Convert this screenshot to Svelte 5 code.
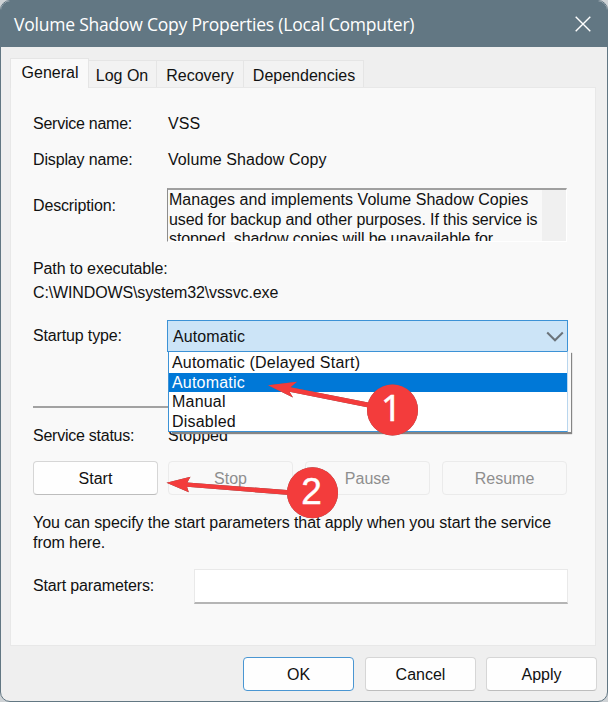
<script>
  const tabs = ['General', 'Log On', 'Recovery', 'Dependencies'];
  const startupTypes = ['Automatic (Delayed Start)', 'Automatic', 'Manual', 'Disabled'];
  const actions = ['Start', 'Stop', 'Pause', 'Resume'];

  let activeTab = $state('General');
  let startupType = $state('Automatic');
  let open = $state(true);
  let params = $state('');

  function pick(type) {
    startupType = type;
    open = false;
  }
</script>

<div class="dialog">
  <header class="titlebar">
    <span class="title">Volume Shadow Copy Properties (Local Computer)</span>
    <button class="close" aria-label="Close">
      <svg width="16" height="16" viewBox="0 0 16 16">
        <path d="M0.7 0.7 15.3 15.3M15.3 0.7 0.7 15.3" />
      </svg>
    </button>
  </header>

  <nav class="tabs">
    {#each tabs as tab}
      <button
        class="tab {tab.toLowerCase().replace(' ', '-')}"
        class:active={activeTab === tab}
        onclick={() => (activeTab = tab)}
      >{tab}</button>
    {/each}
  </nav>

  <main class="panel">
    <div class="row name">
      <span class="label tight">Service name:</span>
      <span class="value">VSS</span>
    </div>
    <div class="row name">
      <span class="label">Display name:</span>
      <span class="value">Volume Shadow Copy</span>
    </div>
    <div class="row desc">
      <span class="label">Description:</span>
      <div class="description">
        <div class="text">
          <div class="wide">Manages and implements Volume Shadow Copies</div>
          <div class="narrow">used for backup and other purposes. If this service is</div>
          <div class="narrow">stopped, shadow copies will be unavailable for</div>
        </div>
        <div class="scroll"></div>
      </div>
    </div>
    <div class="path">
      <div>Path to executable:</div>
      <div>C:\WINDOWS\system32\vssvc.exe</div>
    </div>
    <div class="row startup">
      <span class="label">Startup type:</span>
      <div class="combo">
        <button class="combo-value" onclick={() => (open = !open)}>
          <span>{startupType}</span>
          <svg width="18" height="11" viewBox="0 0 18 11">
            <path d="M1.2 1.5 9 9.3 16.8 1.5" />
          </svg>
        </button>
        {#if open}
          <div class="menu">
            {#each startupTypes as type}
              <button class="option" class:selected={type === startupType} onclick={() => pick(type)}>
                {type}
              </button>
            {/each}
          </div>
        {/if}
      </div>
    </div>
    <hr />
    <div class="row status">
      <span class="label tight">Service status:</span>
      <span class="value">Stopped</span>
    </div>
    <div class="actions">
      {#each actions as action}
        <button class="btn" disabled={action !== 'Start'}>{action}</button>
      {/each}
    </div>
    <p class="hint">
      You can specify the start parameters that apply when you start the service<br />
      from here.
    </p>
    <div class="row params">
      <span class="label">Start parameters:</span>
      <input bind:value={params} aria-label="Start parameters" />
    </div>
  </main>

  <footer class="footer">
    <button class="btn ok">OK</button>
    <button class="btn">Cancel</button>
    <button class="btn">Apply</button>
  </footer>

  <svg class="callouts" width="608" height="702" viewBox="0 0 608 702">
    <g class="arrow">
      <path d="M268 385.3 297 381.8 290.5 387.3 372 403.3 371 408 289.5 391.8 293 397.5Z" />
      <circle cx="392.5" cy="410" r="25.5" />
      <path d="M166.5 482.8 190.5 476.8 187.3 482.4 290 490.3 290 495 187 486.8 188.8 492.3Z" />
      <circle cx="312.5" cy="492.7" r="25.5" />
    </g>
    <text class="one" x="391.2" y="420.5">1</text>
    <text x="311.5" y="503.5">2</text>
  </svg>
</div>

<style>
  :global(body) {
    margin: 0;
    background: #cfd3d6;
  }

  .dialog {
    position: relative;
    box-sizing: border-box;
    width: 608px;
    height: 702px;
    display: flex;
    flex-direction: column;
    background: #efefef;
    border: 1px solid #627783;
    border-radius: 10px;
    overflow: hidden;
    color: #111;
    font-family: "Liberation Sans", Arial, sans-serif;
    font-size: 16px;
    line-height: 20px;
    white-space: nowrap;
  }

  button,
  input {
    font: inherit;
    color: inherit;
    letter-spacing: inherit;
    box-sizing: border-box;
    margin: 0;
    padding: 0;
    border: none;
    background: none;
  }

  .titlebar {
    display: flex;
    align-items: center;
    justify-content: space-between;
    flex: none;
    height: 46px;
    padding: 0 16px 0 13px;
    background: #627783;
    color: #fff;
  }
  .title {
    font-family: "Open Sans", "Noto Sans", sans-serif;
    font-size: 17.5px;
    letter-spacing: -0.22px;
  }
  .close {
    display: flex;
  }
  .close path {
    fill: none;
    stroke: #fff;
    stroke-width: 1.4;
  }

  .tabs {
    display: flex;
    align-items: flex-end;
    flex: none;
    height: 40px;
    padding-left: 9px;
  }
  .tab {
    height: 27px;
    padding-top: 3px;
    background: #f2f2f2;
    border: 1px solid #e5e5e5;
    border-left: none;
    border-bottom: none;
  }
  .tab.active {
    position: relative;
    z-index: 1;
    height: 30px;
    margin-bottom: -1px;
    padding: 0 0 2px 1px;
    background: #f9f9f9;
    border-left: 1px solid #e5e5e5;
  }
  .general { width: 79px; }
  .log-on { width: 68px; padding-right: 1px; }
  .recovery { width: 87px; }
  .dependencies { width: 120px; padding-left: 1px; }

  .panel {
    box-sizing: border-box;
    flex: none;
    width: 586px;
    height: 559px;
    margin-left: 9px;
    padding: 18px 0 0 22px;
    background: #f9f9f9;
    border: 1px solid #e8e8e8;
  }

  .row {
    display: flex;
    align-items: center;
  }
  .label {
    flex: none;
    width: 134px;
    letter-spacing: -0.15px;
  }
  .label.tight {
    letter-spacing: -0.25px;
  }
  .value {
    padding-left: 1px;
    letter-spacing: 0.06px;
  }
  .name {
    height: 36px;
  }
  .desc {
    height: 53px;
    margin-top: 11px;
    align-items: flex-start;
  }
  .desc .label {
    padding-top: 7px;
  }
  .description {
    box-sizing: border-box;
    display: flex;
    width: 400px;
    height: 54px;
    margin-top: -1px;
    border: 1px solid #fff;
    border-top: 2px solid #a0a0a0;
    border-left: 1px solid #8d8d8d;
    overflow: hidden;
  }
  .text {
    flex: 1;
    width: 0;
    padding-left: 1px;
    line-height: 19.5px;
  }
  .wide {
    letter-spacing: 0.04px;
  }
  .narrow {
    letter-spacing: -0.11px;
  }
  .scroll {
    width: 24px;
    background: #f0f0f0;
  }

  .path {
    margin-top: 15px;
    line-height: 24px;
    letter-spacing: -0.13px;
  }

  .startup {
    height: 32px;
    margin-top: 15px;
  }
  .startup .label {
    padding-bottom: 1px;
  }
  .combo {
    position: relative;
  }
  .combo-value {
    display: flex;
    align-items: center;
    justify-content: space-between;
    width: 401px;
    height: 32px;
    padding: 1px 3px 0 5px;
    background: #cce4f7;
    border: 1px solid #3c92d6;
    letter-spacing: 0.1px;
  }
  .combo-value path {
    fill: none;
    stroke: #6b737a;
    stroke-width: 2;
  }
  .menu {
    position: absolute;
    top: 31px;
    left: 1px;
    z-index: 2;
    box-sizing: border-box;
    width: 400px;
    height: 81px;
    padding-top: 1px;
    background: #fff;
    border: 1px solid #3c92d6;
    border-right-color: #b9d6ee;
    box-shadow: 3px 0 0 #fafafa, 4px 2px 1px #858585;
    clip-path: inset(0 -7px -5px 0);
    letter-spacing: 0.2px;
  }
  .option {
    display: block;
    width: 100%;
    height: 19.5px;
    padding-left: 3px;
    line-height: 19.5px;
    text-align: left;
  }
  .option.selected {
    background: #0078d7;
    color: #fff;
  }

  hr {
    width: 534px;
    height: 2px;
    margin: 54px 0 0;
    border: none;
    background: #a2a2a2;
  }
  .status {
    height: 20px;
    margin-top: 18px;
  }

  .actions {
    display: flex;
    gap: 10px;
    margin-top: 15px;
  }
  .btn {
    width: 125px;
    height: 34px;
    padding-top: 1px;
    background: #fefefe;
    border: 1px solid #d6d6d6;
    border-bottom-color: #bdbdbd;
    border-radius: 4px;
  }
  .btn:disabled {
    color: #8e8e8e;
    background: #f9f9f9;
    border-color: #ebebeb;
  }
  .actions .btn:nth-child(3) {
    margin: 0 2px;
  }

  .hint {
    margin: 18px 0 0;
    line-height: 19.5px;
    letter-spacing: -0.07px;
  }

  .params {
    height: 35px;
    margin-top: 17px;
  }
  .params .label {
    width: 161px;
    padding-bottom: 2px;
  }
  input {
    width: 374px;
    height: 35px;
    background: #fff;
    border: 1px solid #e9e9e9;
    border-bottom: 2px solid #b5b5b5;
  }

  .footer {
    display: flex;
    justify-content: flex-end;
    gap: 10px;
    margin: 11px 10px 0 0;
  }
  .footer .btn {
    width: 111px;
  }
  .footer .ok {
    border-color: #4a96d2;
    margin-right: 1px;
  }

  .callouts {
    position: absolute;
    top: -1px;
    left: -1px;
    z-index: 3;
    pointer-events: none;
  }
  .arrow {
    fill: #f33c3c;
    filter: drop-shadow(0 0.5px 0.4px #6a5a5a);
  }
  .callouts text {
    fill: #fff;
    stroke: #fff;
    stroke-width: 0.5;
    font-family: "Liberation Sans", Arial, sans-serif;
    font-size: 37px;
    text-anchor: middle;
  }
  .callouts .one {
    font-family: "Noto Sans", sans-serif;
    font-size: 36px;
  }
</style>
